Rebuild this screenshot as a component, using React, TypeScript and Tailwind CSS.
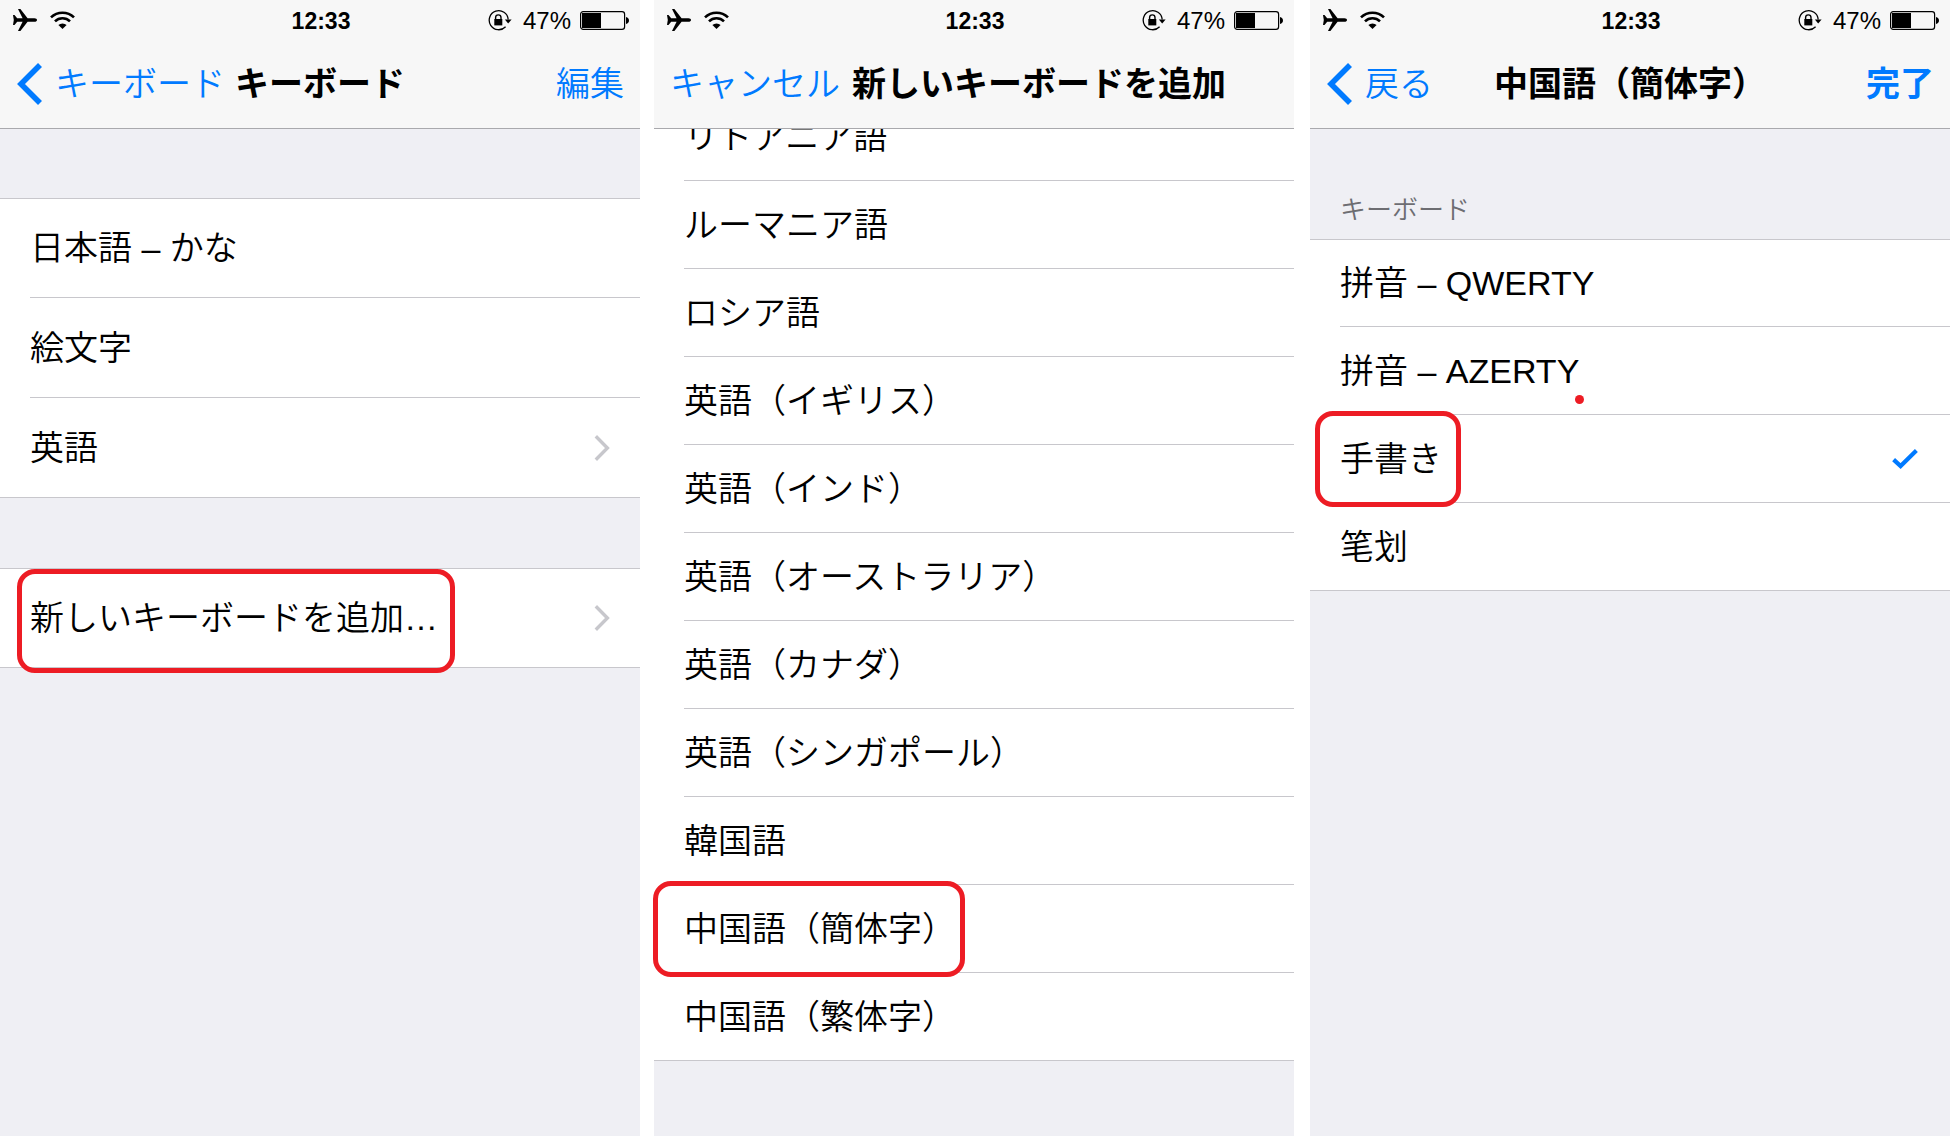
import React from 'react';

interface RowItem {
    label: string;
    accessory?: 'chevron' | 'check';
    // Tailwind classes that size the red marker drawn around the row
    marker?: string;
    dot?: string;
}

interface PhoneScreenProps {
    title: string;
    left: React.ReactNode;
    right?: React.ReactNode;
    children: React.ReactNode;
}

const languageRows: RowItem[] = [
    { label: 'リトアニア語' },
    { label: 'ルーマニア語' },
    { label: 'ロシア語' },
    { label: '英語（イギリス）' },
    { label: '英語（インド）' },
    { label: '英語（オーストラリア）' },
    { label: '英語（カナダ）' },
    { label: '英語（シンガポール）' },
    { label: '韓国語' },
    { label: '中国語（簡体字）', marker: '-left-px -top-1 h-24 w-[312px]' },
    { label: '中国語（繁体字）' },
];

const currentRows: RowItem[] = [
    { label: '日本語 – かな' },
    { label: '絵文字' },
    { label: '英語', accessory: 'chevron' },
];

const addRows: RowItem[] = [
    { label: '新しいキーボードを追加…', accessory: 'chevron', marker: 'left-[17px] top-0 h-[104px] w-[438px]' },
];

const layoutRows: RowItem[] = [
    { label: '拼音 – QWERTY' },
    { label: '拼音 – AZERTY', dot: 'left-[265px] bottom-[11px]' },
    { label: '手書き', accessory: 'check', marker: 'left-[5px] -top-1 h-24 w-[146px]' },
    { label: '笔划' },
];

const AirplaneIcon = () => (
    <svg className="h-[22px] w-6" viewBox="0 0 24 22" fill="#000">
        <path d="M0 6h1.5L4.2 9.2H9.6L5 0H7.4L14.6 9.2H21.5C23 9.2 24 10 24 11S23 12.8 21.5 12.8H14.6L7.4 22H5L9.6 12.8H4.2L1.5 16H0L0.8 11Z" />
    </svg>
);

const WifiIcon = () => (
    <svg className="h-[18px] w-[25px]" viewBox="0 0 25 18" fill="none" stroke="#000" strokeWidth="2.6">
        <path d="M1 6.4a16.4 16.4 0 0 1 23 0" />
        <path d="M5 10.4a10.6 10.6 0 0 1 15 0" />
        <path d="M8.4 14.1a5.8 5.8 0 0 1 8.2 0L12.5 18Z" fill="#000" stroke="none" />
    </svg>
);

const RotationLockIcon = () => (
    <svg className="h-[21px] w-6" viewBox="0 0 24 21" fill="none" stroke="#000" strokeWidth="1.3">
        <path d="M20.2 9.5A9.5 9.5 0 1 0 17.6 16.8" />
        <path d="M16.8 9.4H23.6L20.2 13.4Z" fill="#000" stroke="none" />
        <rect x="6.3" y="9" width="8" height="6.4" fill="#000" stroke="none" />
        <path d="M7.6 9.4V7.6a2.7 2.7 0 0 1 5.4 0V9.4" strokeWidth="1.4" />
    </svg>
);

const BatteryIcon = () => (
    <svg className="h-[19px] w-[49px]" viewBox="0 0 49 19">
        <rect x="0.6" y="0.6" width="44" height="17.8" rx="2.6" fill="none" stroke="#000" strokeWidth="1.2" />
        <rect x="2" y="2" width="19" height="15" fill="#000" />
        <path d="M46 6c1.8 0.3 3 1.6 3 3.5s-1.2 3.2-3 3.5Z" fill="#000" />
    </svg>
);

const BackChevron = () => (
    <svg className="h-[42px] w-[26px] shrink-0" viewBox="0 0 26 42" fill="none" stroke="#007aff" strokeWidth="5.6">
        <path d="M24 2L5 21L24 40" />
    </svg>
);

const DisclosureIcon = () => (
    <svg className="h-[26px] w-4 shrink-0" viewBox="0 0 16 26" fill="none" stroke="#c7c7cc" strokeWidth="3.4">
        <path d="M1.8 1.2L13.4 13L1.8 24.8" />
    </svg>
);

const CheckIcon = () => (
    <svg className="mr-[2px] h-5 w-[26px] shrink-0" viewBox="0 0 26 20" fill="none" stroke="#007aff" strokeWidth="4.2">
        <path d="M1.6 10.6L8.6 17L24.4 1.6" />
    </svg>
);

const StatusBar = () => (
    <div className="flex h-10 items-center pl-[13px] pr-[11px] leading-10">
        <div className="flex flex-1 items-center gap-[13px]">
            <AirplaneIcon />
            <WifiIcon />
        </div>
        <span className="pt-[2px] text-[23px] font-bold">12:33</span>
        <div className="flex flex-1 items-center justify-end gap-[9px]">
            <RotationLockIcon />
            <span className="ml-[2px] pt-[2px] text-2xl leading-10">47%</span>
            <BatteryIcon />
        </div>
    </div>
);

const PhoneScreen: React.FC<PhoneScreenProps> = ({ title, left, right, children }) => (
    <section className="min-w-0 flex-1 bg-[#efeff4]">
        <header className="relative z-10 border-b border-[#a9a9ad] bg-[#f7f7f7]">
            <StatusBar />
            <div className="flex h-[88px] items-center whitespace-nowrap px-4 text-[34px] leading-[50px]">
                <div className="flex flex-1">{left}</div>
                <h1 className="font-bold">{title}</h1>
                <div className="flex flex-1 justify-end">{right}</div>
            </div>
        </header>
        {children}
    </section>
);

const BackButton: React.FC<{ label: string }> = ({ label }) => (
    <button className="flex items-center gap-[13px] font-[350] text-[#007aff]">
        <BackChevron />
        {label}
    </button>
);

const RowList: React.FC<{ rows: RowItem[]; rowHeight: string; className?: string }> = ({ rows, rowHeight, className = '' }) => (
    <ul className={`bg-white ${className}`}>
        {rows.map(row => (
            <li
                key={row.label}
                className={`group relative border-[#c8c7cc] pl-[30px] first:border-t last:border-b ${rowHeight}`}
            >
                <button className="flex h-full w-full items-center justify-between whitespace-nowrap border-b border-[#c8c7cc] pr-[30px] text-left text-[34px] font-[350] leading-[50px] group-last:border-b-0">
                    {row.label}
                    {row.accessory === 'chevron' && <DisclosureIcon />}
                    {row.accessory === 'check' && <CheckIcon />}
                </button>
                {row.marker && (
                    <span className={`pointer-events-none absolute z-10 rounded-[18px] border-5 border-[#ed1c24] ${row.marker}`} />
                )}
                {row.dot && <span className={`absolute size-[9px] rounded-full bg-[#ed1c24] ${row.dot}`} />}
            </li>
        ))}
    </ul>
);

export default function App() {
    return (
        <main
            lang="ja"
            className="flex min-h-screen bg-white font-['Liberation_Sans','Noto_Sans_CJK_JP',sans-serif] text-black"
        >
            <PhoneScreen
                title="キーボード"
                left={<BackButton label="キーボード" />}
                right={<button className="font-[350] text-[#007aff]">編集</button>}
            >
                <RowList rows={currentRows} rowHeight="h-[100px]" className="mt-[69px]" />
                <RowList rows={addRows} rowHeight="h-[100px]" className="mt-[70px]" />
            </PhoneScreen>

            <div className="w-[14px] shrink-0" />

            <PhoneScreen
                title="新しいキーボードを追加"
                left={<button className="pr-3 font-[350] text-[#007aff]">キャンセル</button>}
            >
                {/* scrolled, so the first row sits partly under the header */}
                <RowList rows={languageRows} rowHeight="h-[88px]" className="-mt-9" />
            </PhoneScreen>

            <div className="w-4 shrink-0" />

            <PhoneScreen
                title="中国語（簡体字）"
                left={<BackButton label="戻る" />}
                right={<button className="font-bold text-[#007aff]">完了</button>}
            >
                <h2 className="flex h-[110px] items-end px-[30px] pb-[11px] text-[26px] font-[350] leading-9 text-[#6d6d72]">
                    キーボード
                </h2>
                <RowList rows={layoutRows} rowHeight="h-[88px]" />
            </PhoneScreen>
        </main>
    );
}
